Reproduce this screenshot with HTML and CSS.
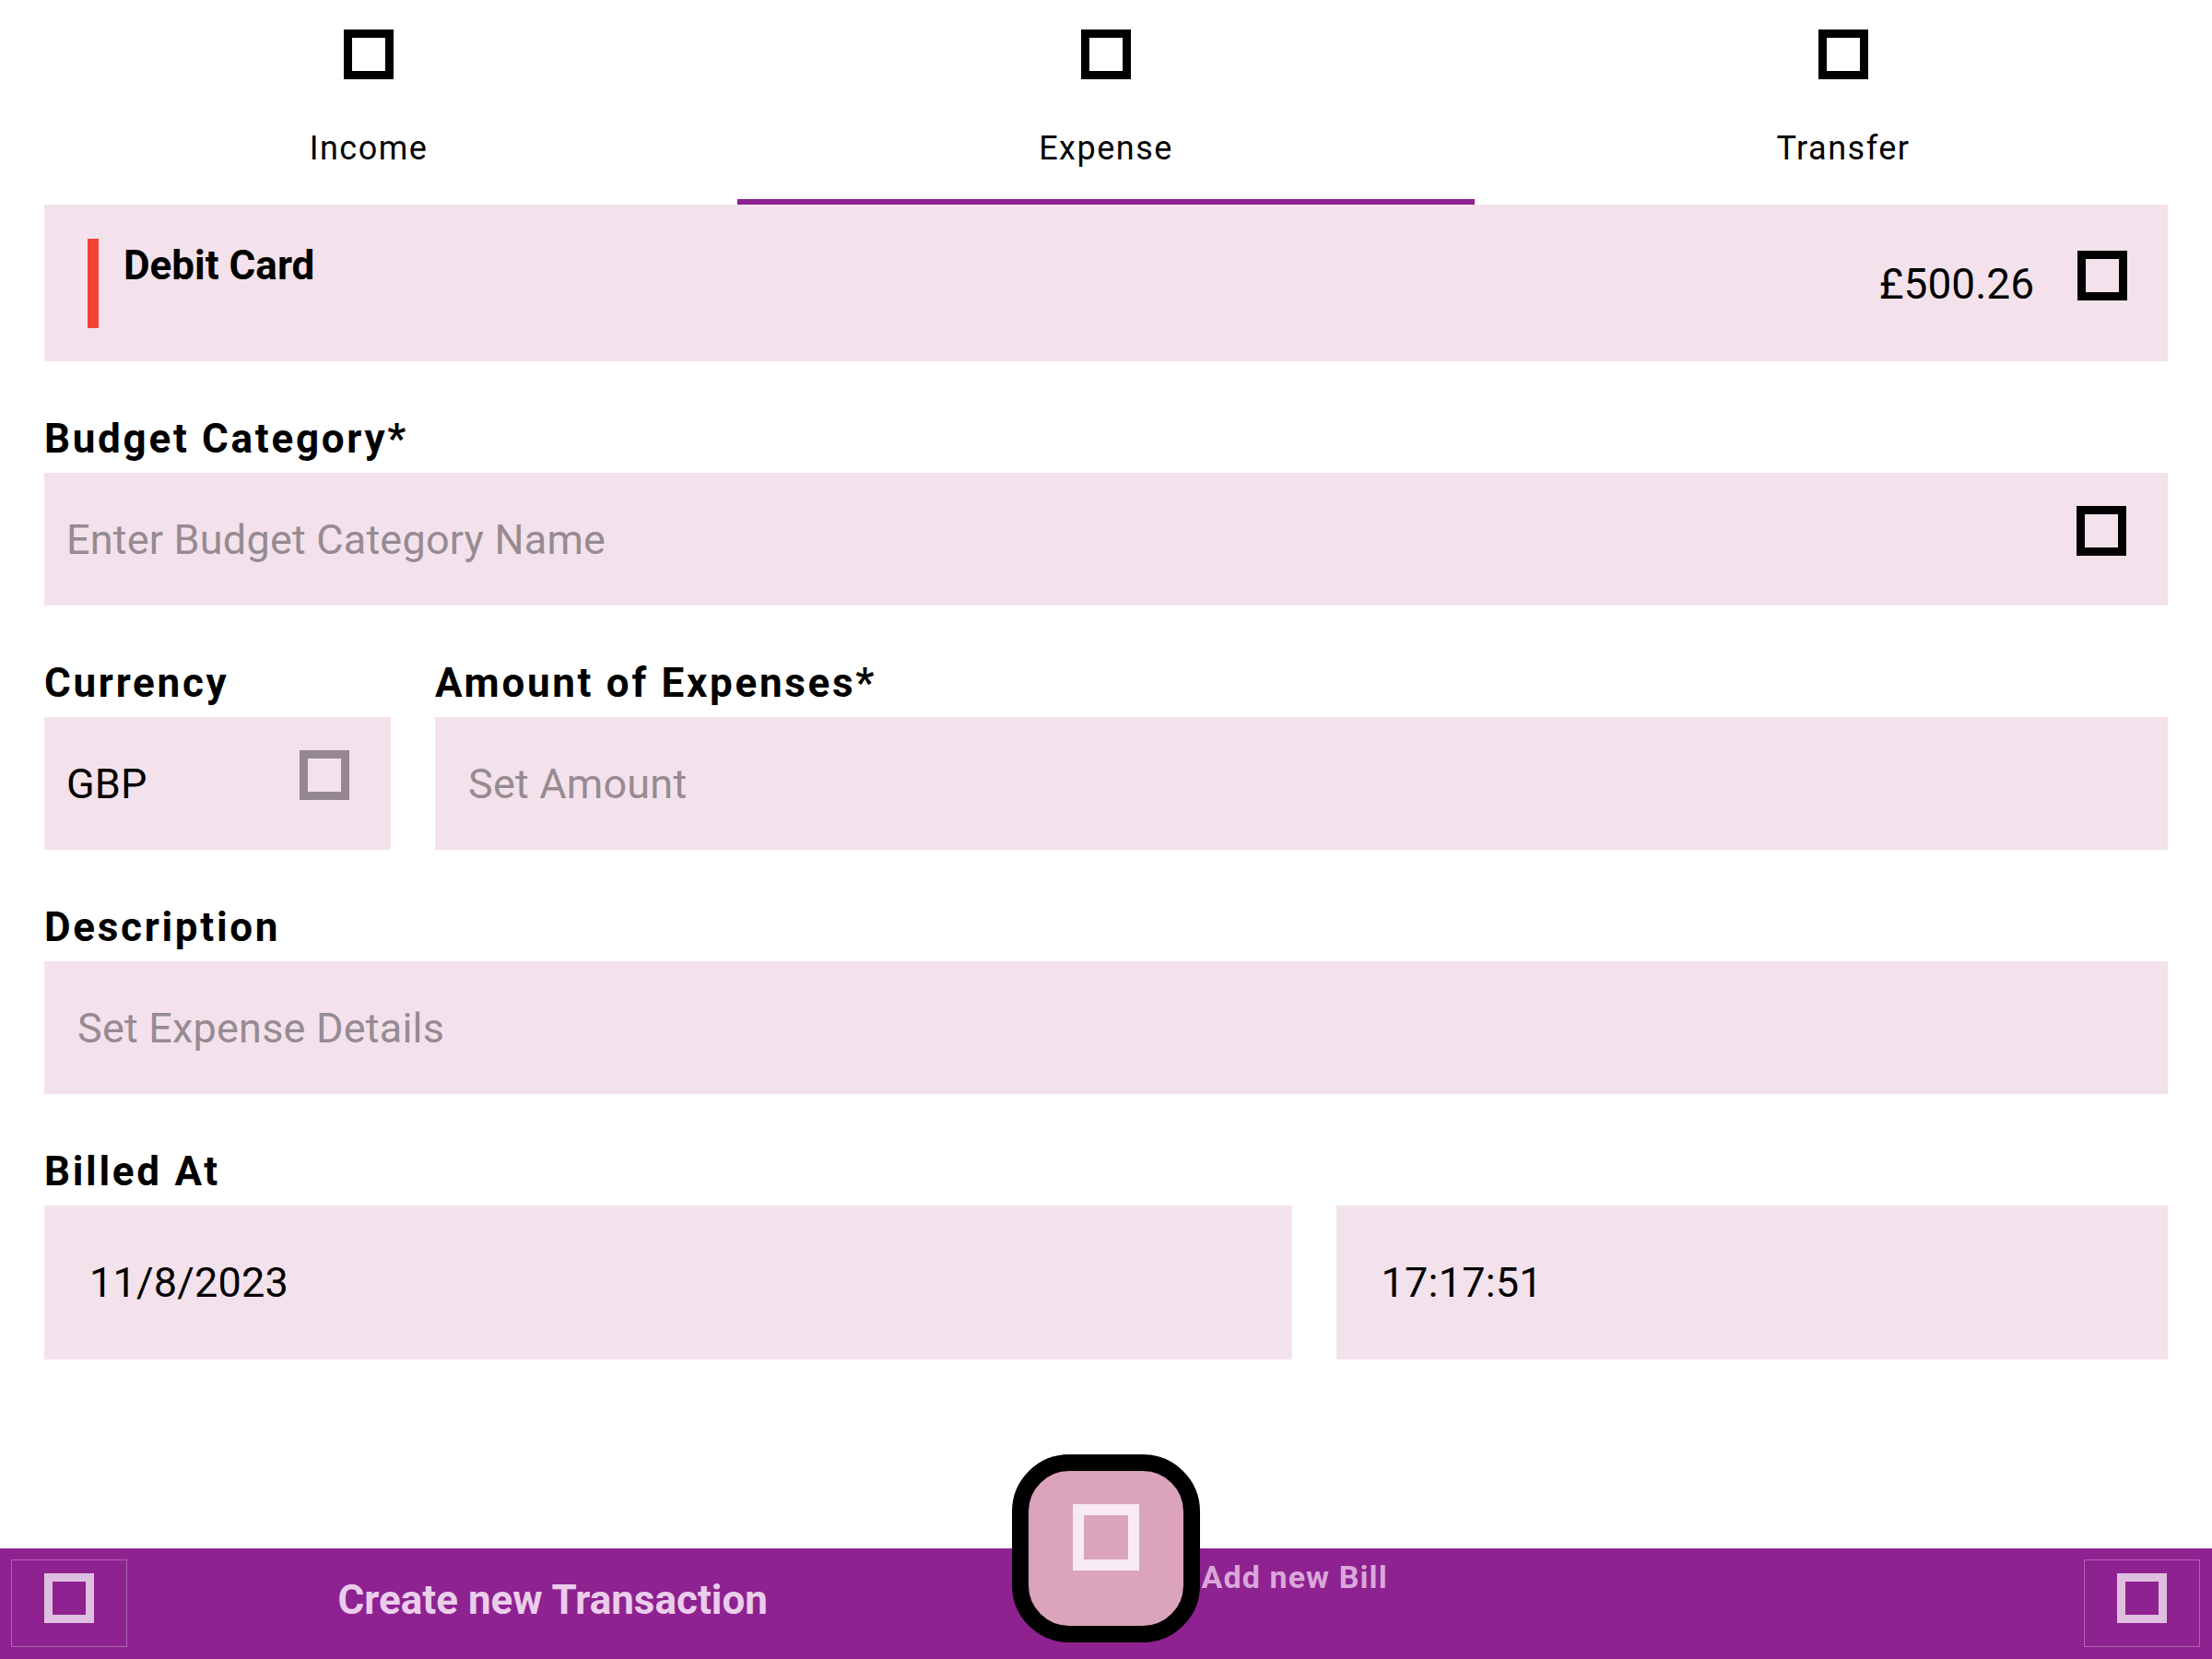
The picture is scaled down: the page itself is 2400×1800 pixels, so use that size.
FILE: index.html
```html
<!DOCTYPE html>
<html lang="en">
<head>
<meta charset="utf-8">
<title>New Transaction</title>
<link rel="stylesheet" href="styles.css">
</head>
<body>
<div class="app">
  <nav class="tabs">
    <div class="tab"><span class="glyph"></span><span class="tab-label">Income</span></div>
    <div class="tab active"><span class="glyph"></span><span class="tab-label">Expense</span></div>
    <div class="tab"><span class="glyph"></span><span class="tab-label">Transfer</span></div>
  </nav>
  <main class="form">
    <div class="account-card">
      <span class="account-bar"></span>
      <span class="account-name">Debit Card</span>
      <span class="account-balance">£500.26</span>
      <span class="glyph"></span>
    </div>

    <section class="field">
      <div class="field-label">Budget Category*</div>
      <div class="field-box pad-s">
        <span class="placeholder">Enter Budget Category Name</span>
        <span class="glyph"></span>
      </div>
    </section>

    <div class="row row-currency">
      <section class="field">
        <div class="field-label">Currency</div>
        <div class="field-box pad-s">
          <span class="value">GBP</span>
          <span class="glyph muted"></span>
        </div>
      </section>
      <section class="field">
        <div class="field-label">Amount of Expenses*</div>
        <div class="field-box pad-m">
          <span class="placeholder">Set Amount</span>
        </div>
      </section>
    </div>

    <section class="field">
      <div class="field-label">Description</div>
      <div class="field-box pad-m">
        <span class="placeholder">Set Expense Details</span>
      </div>
    </section>

    <section class="field">
      <div class="field-label">Billed At</div>
      <div class="row row-date">
        <div class="field-box tall date"><span class="value">11/8/2023</span></div>
        <div class="field-box tall time"><span class="value">17:17:51</span></div>
      </div>
    </section>
  </main>

  <footer class="bottom-bar">
    <div class="bar-btn"><span class="glyph"></span></div>
    <div class="bar-label-left">Create new Transaction</div>
    <div class="fab"><span class="glyph"></span></div>
    <div class="bar-label-right">Add new Bill</div>
    <div class="bar-btn"><span class="glyph"></span></div>
  </footer>
</div>
</body>
</html>
```

FILE: styles.css
```css
* {
  box-sizing: border-box;
}

html,
body {
  margin: 0;
  padding: 0;
  background: #ffffff;
}

body {
  font-family: Roboto, "Noto Sans", sans-serif;
  color: #000000;
}

.app {
  height: 1800px;
  display: flex;
  flex-direction: column;
}

/* generic "missing glyph" icon box */
.glyph {
  display: block;
  flex: none;
  width: 54px;
  height: 54px;
  border: 9px solid currentColor;
}

/* ---------- tabs ---------- */
.tabs {
  display: flex;
}

.tab {
  flex: 1 1 0;
  height: 222px;
  padding-top: 32px;
  border-bottom: 6px solid transparent;
  display: flex;
  flex-direction: column;
  align-items: center;
}

.tab.active {
  border-bottom-color: #8e2290;
}

.tab-label {
  margin-top: 54px;
  font-size: 36px;
  line-height: 42px;
  letter-spacing: 1.5px;
}

/* ---------- form ---------- */
.form {
  flex: 1;
  padding: 0 48px;
}

.account-card {
  height: 170px;
  background: #f3e2eb;
  display: flex;
  align-items: flex-start;
  padding: 37px 44px 0 47px;
}

.account-bar {
  width: 12px;
  height: 97px;
  background: #f44336;
}

.account-name {
  flex: 1;
  margin: 3px 0 0 27px;
  font-size: 44px;
  line-height: 52px;
  font-weight: 700;
  letter-spacing: 0;
}

.account-balance {
  margin-top: 22px;
  font-size: 46px;
  line-height: 54px;
}

.account-card .glyph {
  margin: 13px 0 0 47px;
}

.field {
  margin-top: 56px;
}

.field-label {
  font-size: 44px;
  line-height: 56px;
  font-weight: 700;
  letter-spacing: 2.7px;
  margin-bottom: 9px;
  white-space: nowrap;
}

.field-box {
  height: 144px;
  background: #f3e2eb;
  display: flex;
  align-items: center;
  font-size: 45px;
  letter-spacing: 0.2px;
  padding-right: 45px;
}

.field-box.pad-s {
  padding-left: 24px;
}

.field-box.pad-m {
  padding-left: 36px;
}

.field-box .glyph {
  margin-left: auto;
  margin-top: -18px;
}

.glyph.muted {
  color: #958890;
}

.placeholder {
  color: #968b92;
}

.row {
  display: grid;
  gap: 48px;
}

.row-currency {
  grid-template-columns: 1fr 5fr;
}

.row-date {
  grid-template-columns: 3fr 2fr;
}

.field-box.tall {
  height: 167px;
}

.field-box.date {
  padding-left: 49px;
}

.field-box.time {
  padding-left: 49px;
}

/* ---------- bottom bar ---------- */
.bottom-bar {
  height: 120px;
  background: #8e2290;
  display: flex;
  align-items: flex-start;
  padding: 0 13px 0 12px;
}

.bar-btn {
  width: 126px;
  height: 95px;
  margin-top: 12px;
  border: 1.5px solid #b064b1;
  display: flex;
  justify-content: center;
  padding-top: 13.5px;
  color: #dfbfdf;
}

.bar-label-left {
  flex: 1 1 0;
  margin-top: 30px;
  padding-right: 36px;
  text-align: center;
  font-size: 44px;
  line-height: 52px;
  font-weight: 700;
  letter-spacing: 0;
  color: #ebcdeb;
}

.fab {
  width: 204px;
  height: 204px;
  margin-top: -102px;
  border: 18px solid #000000;
  border-radius: 62px;
  background: #dba3bc;
  display: flex;
  justify-content: center;
  padding-top: 36px;
  color: #f8eaf2;
}

.fab .glyph {
  width: 72px;
  height: 72px;
  border-width: 12px;
}

.bar-label-right {
  flex: 1 1 0;
  margin-top: 11px;
  margin-right: 34px;
  padding-left: 2px;
  font-size: 34px;
  line-height: 40px;
  font-weight: 700;
  letter-spacing: 1.1px;
  color: #d9a7d9;
}
```
